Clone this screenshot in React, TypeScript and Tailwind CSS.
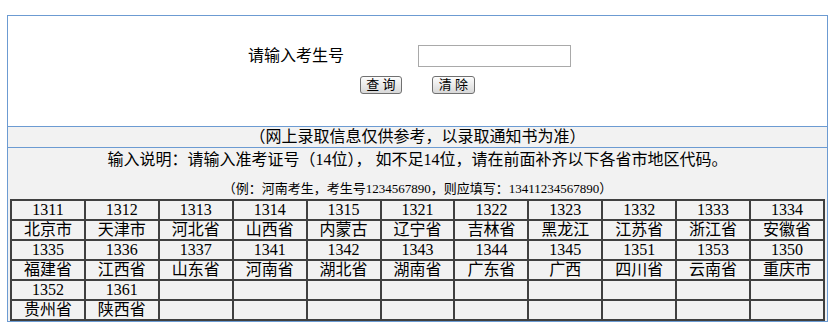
import React, { useState } from "react";

// 省市地区代码
const regions: [string, string][] = [
  ["1311", "北京市"],
  ["1312", "天津市"],
  ["1313", "河北省"],
  ["1314", "山西省"],
  ["1315", "内蒙古"],
  ["1321", "辽宁省"],
  ["1322", "吉林省"],
  ["1323", "黑龙江"],
  ["1332", "江苏省"],
  ["1333", "浙江省"],
  ["1334", "安徽省"],
  ["1335", "福建省"],
  ["1336", "江西省"],
  ["1337", "山东省"],
  ["1341", "河南省"],
  ["1342", "湖北省"],
  ["1343", "湖南省"],
  ["1344", "广东省"],
  ["1345", "广西"],
  ["1351", "四川省"],
  ["1353", "云南省"],
  ["1350", "重庆市"],
  ["1352", "贵州省"],
  ["1361", "陕西省"],
];

const COLS = 11;

const App: React.FC = () => {
  const [examNo, setExamNo] = useState("");

  const groups: ([string, string] | null)[][] = [];
  for (let i = 0; i < 3; i++) {
    const row: ([string, string] | null)[] = [];
    for (let j = 0; j < COLS; j++) {
      row.push(regions[i * COLS + j] ?? null);
    }
    groups.push(row);
  }

  const cell =
    "h-[20px] border border-[#404040] p-0 text-center text-[16px] leading-[18px] text-black";

  return (
    <div
      className="min-h-[327px] bg-white pt-[15px] pl-[7px]"
      style={{ fontFamily: '"Liberation Serif", "Noto Sans CJK SC", serif' }}
    >
      <div className="w-[821px] border border-[#6c9bd2]">
        {/* 查询区 */}
        <div className="h-[111px] border-b border-[#6c9bd2] bg-white pt-[29px]">
          <div className="flex items-center justify-center pr-[16px]">
            <span className="w-[170px] text-[16px] leading-[22px] text-black">
              请输入考生号
            </span>
            <input
              type="text"
              value={examNo}
              onChange={(e) => setExamNo(e.target.value)}
              className="h-[22px] w-[153px] border border-[#a9a9a9] bg-white px-1 text-[13px] outline-none"
            />
          </div>
          <div className="mt-[9px] flex justify-center gap-[30px]">
            <button
              type="button"
              className="h-[18px] w-[42px] rounded-[3px] border border-[#707070] bg-gradient-to-b from-[#fdfdfd] to-[#d8d8d8] p-0 text-[13px] leading-[16px] text-black"
            >
              查 询
            </button>
            <button
              type="button"
              onClick={() => setExamNo("")}
              className="h-[18px] w-[43px] rounded-[3px] border border-[#707070] bg-gradient-to-b from-[#fdfdfd] to-[#d8d8d8] p-0 text-[13px] leading-[16px] text-black"
            >
              清 除
            </button>
          </div>
        </div>

        <div className="h-[21px] border-b border-[#6c9bd2] bg-[#f2f2f2] text-center text-[16px] leading-[20px] text-black">
          （网上录取信息仅供参考，以录取通知书为准）
        </div>

        <div className="bg-[#f2f2f2]">
          <div className="pt-[3px] text-center text-[16px] leading-[18px] text-black">
            输入说明：请输入准考证号（14位）， 如不足14位，请在前面补齐以下各省市地区代码。
          </div>
          <div className="mt-[12px] text-center text-[13px] leading-[16px] text-black">
            （例：河南考生，考生号1234567890，则应填写：13411234567890）
          </div>

          <table className="ml-[2px] mt-[2px] w-[815px] table-fixed border-separate border-spacing-0 border border-[#404040] bg-[#f2f2f2]">
            <tbody>
              {groups.map((row, i) => (
                <React.Fragment key={i}>
                  <tr>
                    {row.map((r, j) => (
                      <td key={j} className={cell}>
                        {r ? r[0] : ""}
                      </td>
                    ))}
                  </tr>
                  <tr>
                    {row.map((r, j) => (
                      <td key={j} className={cell}>
                        {r ? r[1] : ""}
                      </td>
                    ))}
                  </tr>
                </React.Fragment>
              ))}
            </tbody>
          </table>
        </div>
      </div>
    </div>
  );
};

export default App;
